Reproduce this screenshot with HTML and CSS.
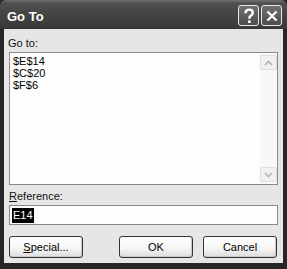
FILE: index.html
```html
<!DOCTYPE html>
<html>
<head>
<meta charset="utf-8">
<link rel="stylesheet" href="styles.css">
</head>
<body>
<div class="window">
  <div class="titlebar">
    <span class="title">Go To</span>
    <div class="caption-buttons">
      <div class="cap-btn">
        <svg width="20" height="20" viewBox="0 0 20 20"><path d="M6.5 7.2 C6.5 4.6 8.2 3.6 10.2 3.6 C12.3 3.6 13.8 4.8 13.8 6.7 C13.8 8.4 12.6 9.1 11.6 9.8 C10.8 10.4 10.4 10.9 10.4 12.2 L10.4 12.8" fill="none" stroke="#fff" stroke-width="2.4"/><rect x="9.1" y="14.4" width="2.6" height="2.6" fill="#fff"/></svg>
      </div>
      <div class="cap-btn">
        <svg width="20" height="20" viewBox="0 0 20 20"><path d="M5.5 5.5 L14.5 14.5 M14.5 5.5 L5.5 14.5" stroke="#fff" stroke-width="2.4" fill="none"/></svg>
      </div>
    </div>
  </div>
  <div class="client">
    <div class="label label-goto">Go to:</div>
    <div class="listbox">
      <div class="items">
        <div class="item">$E$14</div>
        <div class="item">$C$20</div>
        <div class="item">$F$6</div>
      </div>
      <div class="scrollbar">
        <div class="sb-btn"><svg width="9" height="6" viewBox="0 0 9 6"><path d="M1 5 L4.5 1.5 L8 5" fill="none" stroke="#b4b4b4" stroke-width="1.6"/></svg></div>
        <div class="sb-track"></div>
        <div class="sb-btn"><svg width="9" height="6" viewBox="0 0 9 6"><path d="M1 1 L4.5 4.5 L8 1" fill="none" stroke="#b4b4b4" stroke-width="1.6"/></svg></div>
      </div>
    </div>
    <div class="label label-ref"><u>R</u>eference:</div>
    <div class="input"><span class="sel">E14</span></div>
    <div class="buttons">
      <div class="btn"><u>S</u>pecial...</div>
      <div class="spacer"></div>
      <div class="btn">OK</div>
      <div class="btn btn-last">Cancel</div>
    </div>
  </div>
</div>
</body>
</html>
```

FILE: styles.css
```css
html, body {
  margin: 0;
  padding: 0;
  background: #2a2a2a;
}
.window {
  width: 287px;
  height: 269px;
  box-sizing: border-box;
  background: #262626;
  padding: 0 4px 6px 4px;
  display: flex;
  flex-direction: column;
  font-family: "Liberation Sans", Arial, sans-serif;
}
.titlebar {
  height: 29px;
  margin: 0 -4px;
  padding: 0 5px 0 7px;
  box-sizing: border-box;
  display: flex;
  align-items: flex-start;
  justify-content: space-between;
  background: linear-gradient(to bottom, #707070 0px, #505050 3px, #444444 14px, #3a3a3a 28px, #2c2c2c 29px);
  border-radius: 6px 6px 0 0;
}
.title {
  color: #ffffff;
  font-weight: bold;
  font-size: 13px;
  line-height: 15px;
  margin-top: 9px;
}
.caption-buttons {
  display: flex;
  gap: 2px;
  margin-top: 5px;
}
.cap-btn {
  width: 19px;
  height: 19px;
  border: 1px solid #e8e8e8;
  border-radius: 3px;
  background: linear-gradient(to bottom, #707070, #4c4c4c);
  display: flex;
  align-items: center;
  justify-content: center;
  overflow: hidden;
}
.cap-btn svg {
  flex: none;
}
.client {
  flex: 1;
  background: #e6e6e6;
  padding: 8px 5px 0 5px;
  display: flex;
  flex-direction: column;
}
.label {
  font-size: 11px;
  line-height: 13px;
  color: #111;
}
.label-goto {
  margin-left: -1px;
}
.listbox {
  margin-top: 2px;
  height: 133px;
  box-sizing: border-box;
  border: 1px solid #8a8a8a;
  background: #fdfdfd;
  display: flex;
}
.items {
  flex: 1;
  padding: 2px 0 0 3px;
}
.item {
  font-size: 11px;
  line-height: 12px;
  color: #000;
}
.scrollbar {
  width: 17px;
  display: flex;
  flex-direction: column;
  background: #f8f8f8;
}
.sb-btn {
  height: 15px;
  box-sizing: border-box;
  border: 1px solid #dedede;
  border-radius: 2px;
  background: #f0f0f0;
  display: flex;
  align-items: center;
  justify-content: center;
  margin: 2px 0;
}
.sb-track {
  flex: 1;
}
.label-ref {
  margin-top: 5px;
}
.input {
  margin-top: 2px;
  height: 20px;
  box-sizing: border-box;
  border: 1px solid #8a8a8a;
  background: #fdfdfd;
  padding: 2px 0 0 2px;
  font-size: 11px;
}
.sel {
  display: inline-block;
  background: #000;
  color: #fff;
  line-height: 15px;
  padding: 0 1px;
}
.buttons {
  margin-top: 11px;
  display: flex;
  gap: 10px;
}
.spacer {
  flex: 1;
}
.btn {
  width: 74px;
  height: 22px;
  box-sizing: border-box;
  border: 1px solid #333333;
  border-radius: 3px;
  background: linear-gradient(to bottom, #ffffff 0%, #f4f4f4 60%, #dcdcdc 100%);
  box-shadow: inset -1px -1px 0 #c8c8c8;
  font-size: 11px;
  line-height: 20px;
  text-align: center;
  color: #000;
}
.btn-last {
  margin-right: 1px;
}
```
